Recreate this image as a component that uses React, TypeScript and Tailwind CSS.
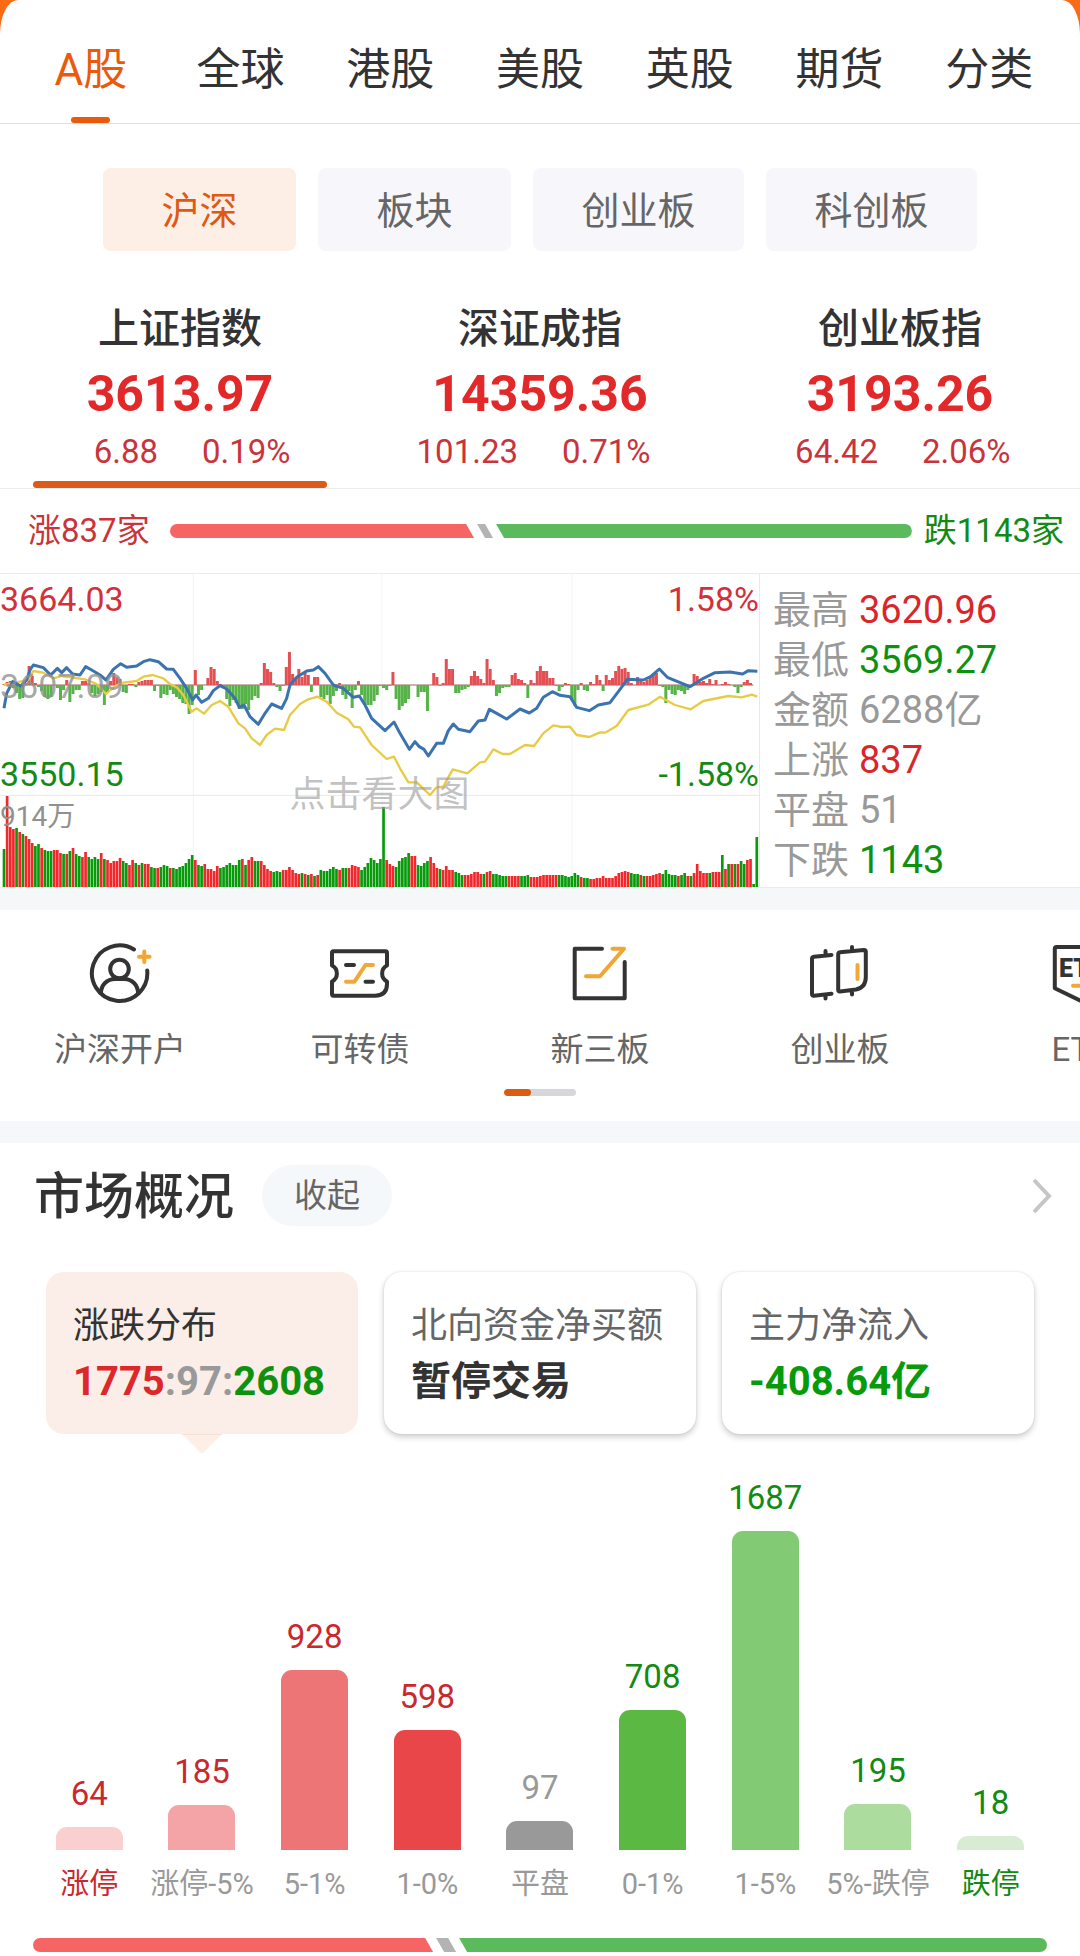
import clsx from "clsx";
import { ReactNode } from "react";

const MARKETS = ["A股", "全球", "港股", "美股", "英股", "期货", "分类"];

const BOARDS = [
  { name: "沪深", width: "w-[193px]" },
  { name: "板块", width: "w-[193px]" },
  { name: "创业板", width: "w-[211px]" },
  { name: "科创板", width: "w-[211px]" },
];

const INDICES = [
  { name: "上证指数", price: "3613.97", change: "6.88", percent: "0.19%" },
  { name: "深证成指", price: "14359.36", change: "101.23", percent: "0.71%" },
  { name: "创业板指", price: "3193.26", change: "64.42", percent: "2.06%" },
];

const STATS = [
  { label: "最高", value: "3620.96", color: "text-[#d9262b]" },
  { label: "最低", value: "3569.27", color: "text-[#0f9110]" },
  { label: "金额", value: "6288亿", color: "text-[#999999]" },
  { label: "上涨", value: "837", color: "text-[#d9262b]" },
  { label: "平盘", value: "51", color: "text-[#999999]" },
  { label: "下跌", value: "1143", color: "text-[#0f9110]" },
];

const DISTRIBUTION = [
  { label: "涨停", count: 64, height: 23, bar: "bg-[#f9cfd0]", text: "text-[#c9282d]", labelText: "text-[#c9282d]" },
  { label: "涨停-5%", count: 185, height: 45, bar: "bg-[#f4a3a6]", text: "text-[#c9282d]", labelText: "text-[#999999]" },
  { label: "5-1%", count: 928, height: 180, bar: "bg-[#ed7576]", text: "text-[#c9282d]", labelText: "text-[#999999]" },
  { label: "1-0%", count: 598, height: 120, bar: "bg-[#e84648]", text: "text-[#c9282d]", labelText: "text-[#999999]" },
  { label: "平盘", count: 97, height: 29, bar: "bg-[#999999]", text: "text-[#999999]", labelText: "text-[#999999]" },
  { label: "0-1%", count: 708, height: 140, bar: "bg-[#5bb943]", text: "text-[#128a14]", labelText: "text-[#999999]" },
  { label: "1-5%", count: 1687, height: 319, bar: "bg-[#83ca75]", text: "text-[#128a14]", labelText: "text-[#999999]" },
  { label: "5%-跌停", count: 195, height: 46, bar: "bg-[#addc9f]", text: "text-[#128a14]", labelText: "text-[#999999]" },
  { label: "跌停", count: 18, height: 14, bar: "bg-[#d7ecd2]", text: "text-[#128a14]", labelText: "text-[#128a14]" },
];

// One entry per trading minute, negative values are drawn green
const VOLUME = [
  -38, 91, 60, 58, -59, 55, -53, 51, 48, 44, -41, -43, 39, -37, -36, -36, 37, 37, 34, -33,
  33, -36, 39, -33, -31, 30, 35, -30, -28, -30, -28, 34, -28, 27, 24, 26, 26, 29, -26, -24,
  22, 27, -24, 22, -24, 23, 23, -20, -19, 19, -20, -22, -21, 19, -19, -18, -20, -21, -24, -28,
  -32, 27, -22, -21, 23, 18, 18, 16, 21, -19, -20, -22, -24, -22, -22, -27, 28, -22, 27, 30,
  -26, -26, 26, 22, 18, 16, -15, -16, -15, 17, 17, 20, 17, 14, 13, -14, 13, -12, 13, -11,
  12, -17, -16, -16, -18, -20, -18, 17, -19, -19, 19, 22, 21, 20, -17, -20, -24, -29, -27, -24,
  -28, -80, 27, 23, 21, -20, -26, -29, -30, -34, 31, 31, -22, -21, -24, -26, 30, 24, 19, -18,
  17, 21, 17, 17, -15, -14, -12, 12, 12, 13, 15, 15, 13, -13, 15, 16, -13, -13, -12, -11,
  -11, 11, 11, 11, 11, -11, -11, -12, 10, 10, 10, 11, 12, 12, 12, 12, 12, -12, -12, -11,
  -10, -11, -14, -12, 10, -9, -9, 8, 8, 9, 9, 11, 9, 9, 9, 11, 14, 15, 16, 15,
  -14, -13, -13, 12, -11, 11, 11, 12, 13, 14, -13, -17, -13, -12, -12, 11, -12, -14, 11, -11,
  14, 23, 16, 14, 14, -14, 15, 15, 15, -32, 18, -23, 23, -23, 23, -26, -23, 27, 28, -3,
  -50,
];

const MOMENTUM = [
  1, 3, 4, -3, -8, -14, -13, 2, 19, 9, 2, -2, -6, -12, -14, -12, 0, -3, -15, -5,
  5, -17, -9, -5, -5, 4, 4, 2, -8, -11, -9, -7, -20, -7, 4, 12, 8, 6, -7, -8,
  1, 1, -2, 3, 4, 5, 5, 5, -6, -1, -13, -9, -10, -5, -9, -12, -14, -18, -19, -29,
  -20, 15, -10, -5, 0, 7, 18, 16, 4, 1, -2, -14, -21, -15, -18, -24, -24, -19, -25, -15,
  -11, -13, 2, 22, 16, 13, 2, -2, -6, -1, 18, 33, 11, 6, 16, 8, 13, 10, -7, 8,
  8, -12, -14, -10, -19, -11, -6, 2, -10, -14, -6, -23, -5, 4, -10, -19, -20, -20, -16, -10,
  -1, -3, -5, -1, 13, -14, -25, -21, -18, -14, 0, 0, -12, -7, -7, -26, 0, 12, 8, -1,
  2, 26, 16, 16, -8, -8, -5, -4, -2, 9, 14, 9, 6, 2, 26, 16, 5, -11, -8, -3,
  -2, -2, 10, 12, 6, 5, 2, -13, 5, 2, 14, 19, 14, 14, 7, 7, -1, -6, -2, 2,
  1, -14, -21, -5, 2, -5, -6, 3, 1, 10, 5, -6, 10, 5, 7, 14, 19, 16, 17, 13,
  2, 0, 8, 5, 3, 5, 8, 10, 12, -1, -2, -18, -5, -9, -10, -5, -6, -9, -5, -2,
  11, 9, 3, 4, 2, 6, 1, 5, 0, 1, 3, 1, 0, -2, -8, -2, 3, 5, 2,
];

const PRICE_LINE =
  "12,415 20,370 38,335 62,348 80,330 90,300 100,285 130,293 152,315 172,295 185,308 200,293 218,312 240,315 257,290 275,300 300,315 318,330 340,298 362,281 380,292 410,288 430,275 450,269 475,275 500,297 520,298 540,325 560,355 578,390 588,375 605,397 625,385 640,362 660,347 680,357 705,385 718,412 732,405 750,440 775,463 795,430 815,402 845,415 860,385 870,345 890,322 920,303 940,300 955,290 975,310 1000,345 1030,355 1060,382 1078,378 1095,405 1115,445 1155,482 1182,456 1200,490 1228,538 1245,515 1258,530 1272,538 1285,558 1310,520 1330,520 1345,482 1360,462 1375,478 1410,485 1435,453 1455,450 1468,418 1490,430 1520,447 1560,417 1588,429 1610,415 1630,382 1657,365 1680,376 1710,380 1730,412 1768,422 1795,405 1830,398 1855,365 1882,328 1930,330 1952,320 1978,297 2002,322 2070,350 2110,325 2145,308 2190,306 2228,312 2245,302 2272,304";

const AVERAGE_LINE =
  "12,345 60,335 85,330 100,303 130,308 160,325 185,318 215,322 255,328 290,342 318,372 345,348 370,338 410,333 430,320 458,315 490,325 510,342 530,352 550,375 575,425 590,415 612,431 635,405 660,393 685,410 715,460 735,475 755,505 780,525 800,495 825,476 852,480 870,435 900,402 925,388 953,380 980,395 1010,428 1045,448 1062,470 1080,472 1115,525 1160,567 1182,560 1200,595 1225,637 1250,637 1290,675 1310,652 1330,650 1358,598 1402,610 1440,577 1455,575 1480,538 1508,552 1530,552 1575,525 1602,528 1630,490 1660,466 1685,471 1710,470 1730,495 1768,501 1800,487 1815,488 1850,468 1885,420 1945,404 1980,380 2025,405 2072,418 2110,393 2185,378 2225,382 2255,374 2272,380";

function MarketTabs() {
  return (
    <nav className="flex border-b border-[#dddfe0] px-4">
      {MARKETS.map((name, i) => (
        <button
          key={name}
          className={clsx(
            "flex flex-1 flex-col items-center pt-10 text-[44px] leading-[60px]",
            i === 0 ? "text-[#ea5a0c]" : "text-[#333333]"
          )}
        >
          {name}
          <span className={clsx("mt-[17px] h-1.5 w-[39px] rounded-[3px]", i === 0 && "bg-[#ea5a0c]")} />
        </button>
      ))}
    </nav>
  );
}

function BoardTabs() {
  return (
    <div className="flex justify-center gap-[22px] pt-11">
      {BOARDS.map((board, i) => (
        <button
          key={board.name}
          className={clsx(
            "h-[83px] rounded-lg pt-1 text-[38px]",
            board.width,
            i === 0 ? "bg-[#fdeee6] text-[#dd5a12]" : "bg-[#f7f7fb] text-[#666666]"
          )}
        >
          {board.name}
        </button>
      ))}
    </div>
  );
}

function IndexTabs() {
  return (
    <div className="grid grid-cols-3 border-b border-[#ececec] pt-[50px]">
      {INDICES.map((index, i) => (
        <button key={index.name} className="flex flex-col items-center">
          <span className="text-[41px] leading-[56px] font-medium text-[#333333]">{index.name}</span>
          <span className="mt-[9px] text-[50px] leading-[56px] font-bold text-[#e3282a]">{index.price}</span>
          <span className="mt-1.5 grid w-full grid-cols-2 gap-11 text-[33px] leading-[48px] text-[#c9343a]">
            <span className="text-right">{index.change}</span>
            <span className="text-left">{index.percent}</span>
          </span>
          <span className={clsx("mt-[5px] h-[7px] w-[294px] rounded", i === 0 && "bg-[#dc5a1a]")} />
        </button>
      ))}
    </div>
  );
}

// Red / grey / green bar with slanted joints
function SplitBar({ up, down, flat }: { up: number; down: number; flat: string }) {
  return (
    <div className="flex h-3.5 flex-1 gap-[3px]">
      <div
        className="rounded-l-full bg-[#f76464] [clip-path:polygon(0_0,calc(100%-8px)_0,100%_100%,0_100%)]"
        style={{ flex: `${up} 1 0` }}
      />
      <div className={clsx("bg-[#b3b3b3] [clip-path:polygon(0_0,calc(100%-8px)_0,100%_100%,8px_100%)]", flat)} />
      <div
        className="rounded-r-full bg-[#5bba5b] [clip-path:polygon(0_0,100%_0,100%_100%,8px_100%)]"
        style={{ flex: `${down} 1 0` }}
      />
    </div>
  );
}

function IntradayChart() {
  const x = (i: number) => 12 + i * 9.41;
  return (
    <div className="relative h-[313px] flex-1 border-r border-[#e6eaec]">
      <svg className="block h-full w-full" viewBox="0 12 2277 939" preserveAspectRatio="none">
        <g stroke="#f1f3f4" strokeWidth="3">
          <path d="M580 12V951M1146 12V951M1716 12V951" />
          <path d="M0 676H2277" stroke="#e6eaec" />
        </g>
        <path d="M12 345H2260" stroke="#9a6a5c" strokeWidth="3" />
        {MOMENTUM.map((v, i) => (
          <rect
            key={i}
            x={x(i) - 4.5}
            y={v > 0 ? 345 - v * 3 : 345}
            width="9"
            height={Math.abs(v) * 3}
            fill={v > 0 ? "#e35053" : "#56b347"}
          />
        ))}
        {VOLUME.map((v, i) => (
          <rect
            key={i}
            x={x(i) - 4}
            y={951 - Math.abs(v) * 3}
            width="8"
            height={Math.abs(v) * 3}
            fill={v > 0 ? "#f0282c" : "#079a0a"}
          />
        ))}
        <polyline points={AVERAGE_LINE} fill="none" stroke="#e8cb45" strokeWidth="7" strokeLinejoin="round" />
        <polyline points={PRICE_LINE} fill="none" stroke="#3a73b0" strokeWidth="9" strokeLinejoin="round" />
      </svg>
      <div className="absolute inset-0 text-[34px] leading-10">
        <span className="absolute top-[5px] left-0 text-[#d2303a]">3664.03</span>
        <span className="absolute top-[92px] left-0 text-[#909090]/80">3607.09</span>
        <span className="absolute top-[180px] left-0 text-[#128a14]">3550.15</span>
        <span className="absolute top-[5px] right-0 text-[#d2303a]">1.58%</span>
        <span className="absolute top-[180px] right-0 text-[#128a14]">-1.58%</span>
        <span className="absolute top-[223px] left-0 text-[28px] text-[#909090]">914万</span>
        <span className="absolute inset-x-0 top-[201px] text-center text-[36px] text-[#999999]/60">点击看大图</span>
      </div>
    </div>
  );
}

function StatList() {
  return (
    <dl className="w-[320px] pt-[11px] pl-[13px] text-[38px] leading-[50px]">
      {STATS.map((stat) => (
        <div key={stat.label} className="flex gap-2.5">
          <dt className="text-[#999999]">{stat.label}</dt>
          <dd className={stat.color}>{stat.value}</dd>
        </div>
      ))}
    </dl>
  );
}

function Icon({ children }: { children: ReactNode }) {
  return (
    <svg
      className="size-16"
      viewBox="0 0 64 64"
      fill="none"
      stroke="#333333"
      strokeWidth="4"
      strokeLinecap="round"
      strokeLinejoin="round"
    >
      {children}
    </svg>
  );
}

const SHORTCUTS = [
  {
    label: "沪深开户",
    icon: (
      <Icon>
        <path d="M46 7.5A27.7 27.7 0 1 0 59.2 28.5" />
        <circle cx="31.5" cy="27" r="9.3" />
        <path d="M13 51C13 43 19 37 27 37H36C44 37 50 43 50 51" />
        <path d="M56.3 9.5V20M51 14.7H61.6" stroke="#f5a52e" />
      </Icon>
    ),
  },
  {
    label: "可转债",
    icon: (
      <Icon>
        <path d="M5.5 9.3H57.5Q59 9.3 59 11V23.5A9 9 0 0 0 59 39.5V42Q59 53.7 47 53.7H5.5Q4 53.7 4 52V39.5A9 9 0 0 0 4 23.5V11Q4 9.3 5.5 9.3Z" />
        <path d="M18 23H26M37.5 39.7H45" />
        <path d="M18 39.7H26.5L37.5 23H45" stroke="#f0a935" />
      </Icon>
    ),
  },
  {
    label: "新三板",
    icon: (
      <Icon>
        <path d="M34 6.7H6.7V56.2H56.7V20" />
        <path d="M44.5 6.7H56L32 34.3H18" stroke="#f0a535" />
      </Icon>
    ),
  },
  {
    label: "创业板",
    icon: (
      <Icon>
        <path d="M23.5 13L6 14.8Q4 15 4 17V52Q4 54 6 53.7L23.5 51.7M17.5 9V13M17.5 53V56.5" />
        <path d="M32 10.3L55.8 7.9Q57.8 7.7 57.8 9.5V35Q57.8 45.5 48 47.5L32 49.5Q30.2 49.7 30.2 48V12.5Q30.2 10.5 32 10.3ZM44 5V9M44 49V52.5" />
        <path d="M49.5 23V37" stroke="#f0a935" />
      </Icon>
    ),
  },
  {
    label: "ETF",
    icon: (
      <Icon>
        <path d="M8.5 5H55.5Q57.2 5 57.2 6.8V46.3L32 58.5L6.8 46.3V6.8Q6.8 5 8.5 5Z" />
        <text x="11" y="35" fontSize="25" fontWeight="900" fill="#333333" stroke="none">
          ETF
        </text>
        <path d="M25 43.7H39" stroke="#f0a935" />
      </Icon>
    ),
  },
];

function Shortcuts() {
  return (
    <section className="overflow-hidden pt-8 pb-[25px]">
      <div className="flex">
        {SHORTCUTS.map((item) => (
          <a key={item.label} href="#" className="flex w-2/9 shrink-0 flex-col items-center">
            {item.icon}
            <span className="mt-[25px] text-[33px] leading-[38px] text-[#666666]">{item.label}</span>
          </a>
        ))}
      </div>
      <div className="mx-auto mt-5 h-[7px] w-[72px] overflow-hidden rounded-full bg-[#d6d6dc]">
        <div className="h-full w-[27px] rounded-full bg-[#dc5a12]" />
      </div>
    </section>
  );
}

function OverviewCard({ title, active, children }: { title: string; active?: boolean; children: ReactNode }) {
  return (
    <button
      className={clsx(
        "relative flex h-[162px] flex-1 flex-col justify-center rounded-[18px] pt-1 pl-[27px] text-left",
        active ? "bg-[#fbeee8]" : "bg-white shadow-[0_3px_6px_rgba(0,0,0,0.2),0_0_2px_rgba(0,0,0,0.12)]"
      )}
    >
      <span className={clsx("text-[36px] leading-[52px]", active ? "text-[#333333]" : "text-[#666666]")}>{title}</span>
      <span className="mt-0.5 text-[40px] leading-[56px] font-bold">{children}</span>
      {active && (
        <svg className="absolute top-full left-1/2 h-5 w-10 -translate-x-1/2" viewBox="0 0 40 20">
          <path d="M0 0H40L20 20Z" fill="#fdeee6" />
          <path d="M0 0.5H40" stroke="#f5e0d6" />
        </svg>
      )}
    </button>
  );
}

function Distribution() {
  return (
    <div className="mt-11 grid grid-cols-9 px-[33px]">
      {DISTRIBUTION.map((item) => (
        <div key={item.label} className="flex flex-col items-center justify-end">
          <span className={clsx("text-[33px] leading-10", item.text)}>{item.count}</span>
          <div className={clsx("mt-[13px] w-[67px] rounded-t-[11px]", item.bar)} style={{ height: item.height }} />
          <span className={clsx("mt-3.5 text-[29px] leading-10 whitespace-nowrap", item.labelText)}>
            {item.label}
          </span>
        </div>
      ))}
    </div>
  );
}

export default function App() {
  return (
    <div className="bg-[#fb6a14] font-['Roboto','Noto_Sans_CJK_SC',sans-serif]">
      <main className="overflow-hidden rounded-t-[18px_34px] bg-white pb-1">
        <MarketTabs />
        <BoardTabs />
        <IndexTabs />

        <div className="flex h-[84px] items-center pr-4 pl-7 text-[33px]">
          <span className="mr-5 text-[#c9343a]">涨837家</span>
          <SplitBar up={837} down={1143} flat="w-4" />
          <span className="ml-3 text-[#128a14]">跌1143家</span>
        </div>

        <section className="flex border-t border-[#e8ecee]">
          <IntradayChart />
          <StatList />
        </section>

        <div className="h-[23px] border-t border-[#e8ecee] bg-[#f5f8f9]" />
        <Shortcuts />
        <div className="h-[22px] bg-[#f5f8fa]" />

        <section>
          <div className="flex items-center pt-[22px] pr-7 pl-[34px]">
            <h2 className="pt-1 text-[50px] leading-[57px] font-medium text-[#333333]">市场概况</h2>
            <button className="ml-7 h-[61px] w-[130px] rounded-full bg-[#f5f8fb] text-[33px] text-[#666666]">
              收起
            </button>
            <a href="#" aria-label="查看更多" className="ml-auto">
              <svg className="h-9 w-5" viewBox="0 0 20 36" fill="none" stroke="#c6c6c6" strokeWidth="4">
                <path d="M2 2L17 18L2 34" />
              </svg>
            </a>
          </div>

          <div className="mt-[46px] flex gap-[26px] px-[46px]">
            <OverviewCard title="涨跌分布" active>
              <span className="text-[#dc282a]">1775</span>
              <span className="text-[#999999]">:97:</span>
              <span className="text-[#0f9110]">2608</span>
            </OverviewCard>
            <OverviewCard title="北向资金净买额">
              <span className="text-[#333333]">暂停交易</span>
            </OverviewCard>
            <OverviewCard title="主力净流入">
              <span className="text-[#079a0a]">-408.64亿</span>
            </OverviewCard>
          </div>

          <Distribution />
          <div className="mt-[34px] flex px-[33px]">
            <SplitBar up={1775} down={2608} flat="w-5" />
          </div>
        </section>
      </main>
    </div>
  );
}
